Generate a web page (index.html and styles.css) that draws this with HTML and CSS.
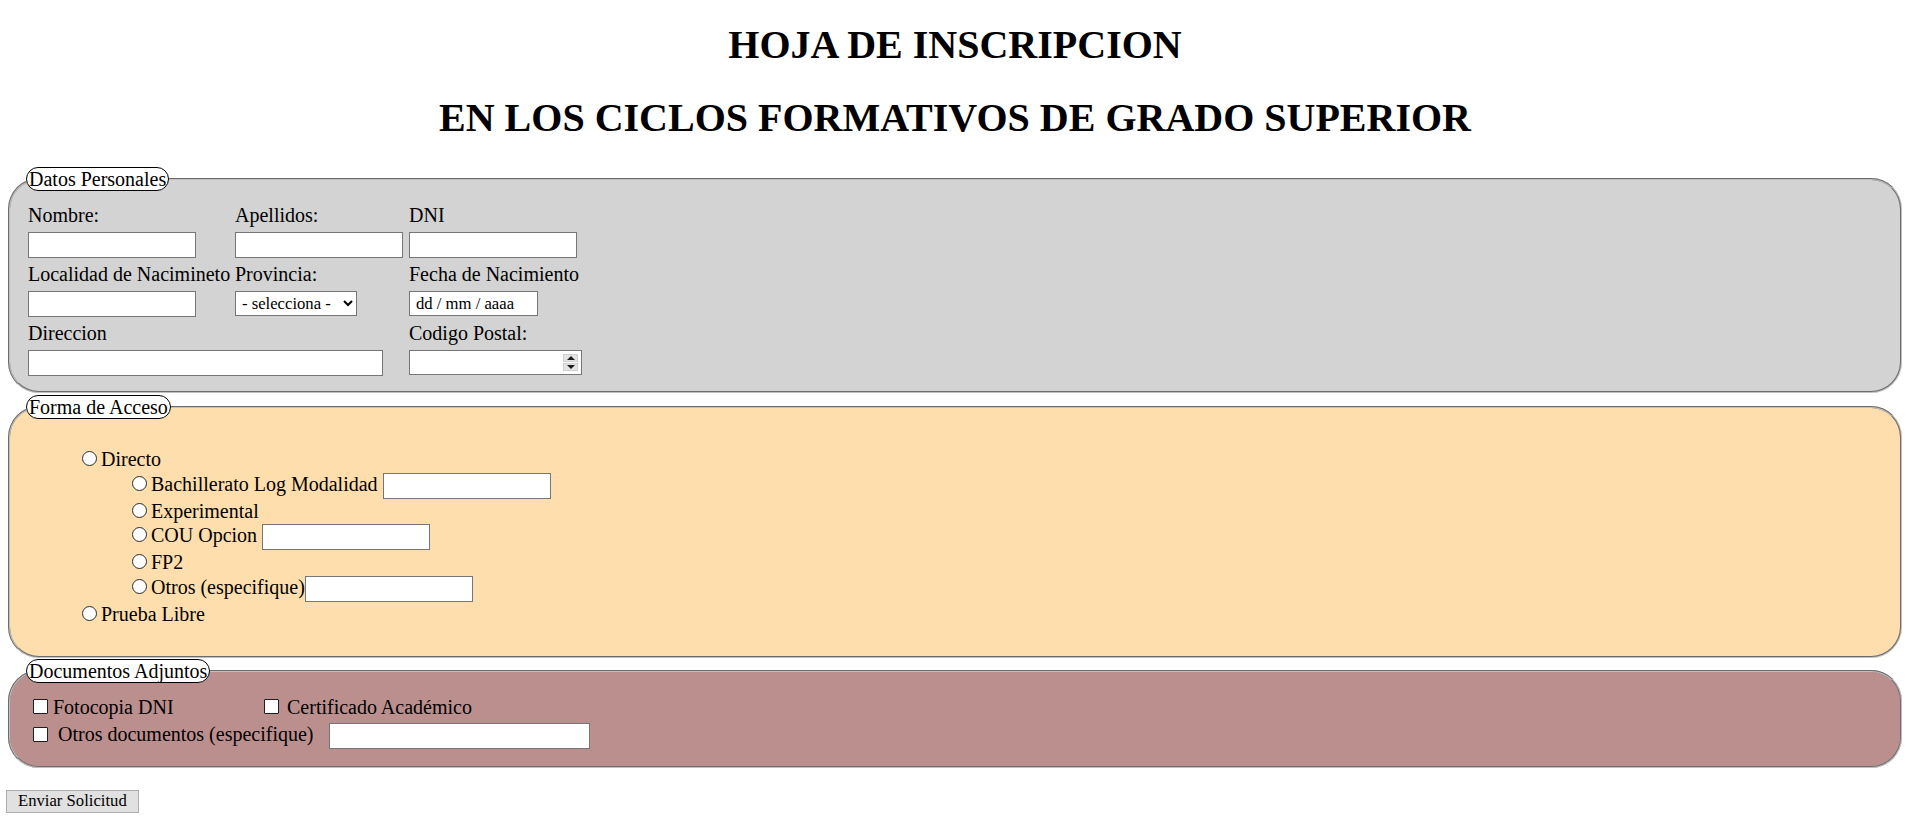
FILE: index.html
```html
<!DOCTYPE html>
<html lang="es">
<head>
<meta charset="utf-8">
<title>Hoja de inscripción</title>
<link rel="stylesheet" href="styles.css">
</head>
<body>
<header class="titles">
  <h1 class="title">HOJA DE INSCRIPCION</h1>
  <h1 class="title">EN LOS CICLOS FORMATIVOS DE GRADO SUPERIOR</h1>
</header>
<form class="form" action="#">
  <fieldset class="box box-gray">
    <legend class="tag">Datos Personales</legend>
    <div class="personal">
      <label class="lbl" for="nombre">Nombre:</label>
      <label class="lbl" for="apellidos">Apellidos:</label>
      <label class="lbl" for="dni">DNI</label>
      <input class="field w168" id="nombre" type="text">
      <input class="field w168" id="apellidos" type="text">
      <input class="field w168" id="dni" type="text">
      <label class="lbl" for="localidad">Localidad de Nacimineto</label>
      <label class="lbl" for="provincia">Provincia:</label>
      <label class="lbl" for="fecha">Fecha de Nacimiento</label>
      <input class="field w168" id="localidad" type="text">
      <select class="pick" id="provincia"><option>- selecciona -</option></select>
      <input class="field date" id="fecha" type="text" value="dd / mm / aaaa">
      <label class="lbl span2" for="direccion">Direccion</label>
      <label class="lbl" for="cp">Codigo Postal:</label>
      <input class="field wide span2" id="direccion" type="text">
      <div class="number">
        <input class="number-in" id="cp" type="text">
        <span class="spin"><span class="spin-btn"><span class="tri-up"></span></span><span class="spin-btn"><span class="tri-down"></span></span></span>
      </div>
    </div>
  </fieldset>

  <fieldset class="box box-orange">
    <legend class="tag">Forma de Acceso</legend>
    <ul class="access">
      <li>
        <div class="opt"><input class="radio" type="radio" name="acceso"><span class="opt-text">Directo</span></div>
        <ul class="sub">
          <li class="opt opt-in"><input class="radio" type="radio" name="directo"><span class="opt-text">Bachillerato Log Modalidad</span><input class="field w168 gap-sp" type="text"></li>
          <li class="opt"><input class="radio" type="radio" name="directo"><span class="opt-text">Experimental</span></li>
          <li class="opt opt-in"><input class="radio" type="radio" name="directo"><span class="opt-text">COU Opcion</span><input class="field w168 gap-sp" type="text"></li>
          <li class="opt"><input class="radio" type="radio" name="directo"><span class="opt-text">FP2</span></li>
          <li class="opt opt-in"><input class="radio" type="radio" name="directo"><span class="opt-text">Otros (especifique)</span><input class="field w168" type="text"></li>
        </ul>
      </li>
      <li class="opt"><input class="radio" type="radio" name="acceso"><span class="opt-text">Prueba Libre</span></li>
    </ul>
  </fieldset>

  <fieldset class="box box-rose">
    <legend class="tag">Documentos Adjuntos</legend>
    <div class="docs">
      <div class="doc-row">
        <label class="doc doc-first"><input class="check" type="checkbox"><span class="doc-text">Fotocopia DNI</span></label>
        <label class="doc"><input class="check check-b" type="checkbox"><span class="doc-text doc-text-b">Certificado Académico</span></label>
      </div>
      <div class="doc-row doc-row-2">
        <label class="doc"><input class="check check-2" type="checkbox"><span class="doc-text doc-text-2">Otros documentos (especifique)</span></label>
        <input class="field other" type="text">
      </div>
    </div>
  </fieldset>

  <button class="send" type="submit">Enviar Solicitud</button>
</form>
</body>
</html>
```

FILE: styles.css
```css
* {
  box-sizing: border-box;
}

html {
  background: #fff;
}

body {
  margin: 0 6px;
  font-family: "Liberation Serif", "Times New Roman", serif;
  font-size: 20px;
  line-height: 23px;
  color: #000;
}

.titles {
  display: flex;
  flex-direction: column;
  gap: 28.5px;
  padding-top: 23px;
  margin-bottom: 27px;
}

.title {
  margin: 0;
  font-size: 40px;
  line-height: 44px;
  font-weight: bold;
  text-align: center;
}

.form {
  margin: 0;
}

.box {
  margin: 2px 2px 0;
  padding: 7px 15px 12px;
  border: 2px groove #c0c0c0;
  border-radius: 31px;
  min-width: 0;
}

.box-gray {
  background: #d3d3d3;
}

.box-orange {
  background: #ffdead;
}

.box-rose {
  margin-top: 1px;
  background: #bc8f8f;
}

.tag {
  margin-left: 1px;
  padding: 0 2px;
  border: 1px solid #000;
  border-radius: 12px;
  background: #fff;
  font-size: 20px;
  line-height: 22px;
}

/* Datos personales */
.personal {
  display: grid;
  grid-template-columns: 207px 174px 1fr;
  row-gap: 5px;
  align-items: center;
  padding: 6px 0 3.5px 3px;
}

.lbl {
  line-height: 23px;
  white-space: nowrap;
}

.span2 {
  grid-column: span 2;
}

.field {
  display: block;
  height: 26px;
  margin: 0;
  padding: 1px 3px;
  border: 1px solid #767676;
  border-radius: 0;
  background: #fff;
  font-family: "Liberation Serif", "Times New Roman", serif;
  font-size: 16.67px;
  color: #000;
}

.w168 {
  width: 168px;
}

.wide {
  width: 355px;
}

.date {
  width: 129px;
  height: 25px;
  padding-left: 6px;
}

.pick {
  width: 122px;
  height: 25px;
  margin: 0;
  padding: 0 2px;
  border: 1px solid #767676;
  border-radius: 0;
  background-color: #fff;
  font-family: "Liberation Serif", "Times New Roman", serif;
  font-size: 16.67px;
  color: #000;
}

.number {
  display: flex;
  align-items: center;
  width: 173px;
  height: 25px;
  border: 1px solid #767676;
  background: #fff;
}

.number-in {
  flex: 1;
  min-width: 0;
  height: 100%;
  margin: 0;
  padding: 0 3px;
  border: 0;
  background: transparent;
  font-family: "Liberation Serif", "Times New Roman", serif;
  font-size: 16.67px;
}

.spin {
  display: flex;
  flex-direction: column;
  gap: 1px;
  width: 15px;
  height: 17px;
  margin-right: 3px;
}

.spin-btn {
  display: flex;
  flex: 1;
  align-items: center;
  justify-content: center;
  background: #e3e3e3;
  border: 1px solid #d0d0d0;
}

.tri-up {
  width: 0;
  height: 0;
  border-left: 4px solid transparent;
  border-right: 4px solid transparent;
  border-bottom: 4px solid #1a1a1a;
}

.tri-down {
  width: 0;
  height: 0;
  border-left: 4px solid transparent;
  border-right: 4px solid transparent;
  border-top: 4px solid #1a1a1a;
}

/* Forma de acceso */
.access {
  list-style: none;
  margin: 21px 0 17.5px;
  padding-left: 51px;
}

.sub {
  list-style: none;
  margin: 0;
  padding-left: 50px;
}

.opt {
  display: flex;
  align-items: flex-start;
  height: 24.5px;
}

.opt-in {
  height: 27px;
}

.radio {
  appearance: none;
  flex: none;
  width: 15px;
  height: 15px;
  margin: 4px 4px 0 6px;
  border: 1px solid #2a2a2a;
  border-radius: 50%;
  background: #fff;
}

.opt-text {
  margin-top: 1px;
  line-height: 23px;
  white-space: nowrap;
}

.opt .field {
  margin-top: 1px;
}

.gap-sp {
  margin-left: 5px;
}

/* Documentos */
.docs {
  display: flex;
  flex-direction: column;
  gap: 3.5px;
  padding: 5px 0 4.5px;
}

.doc-row {
  display: flex;
  align-items: flex-start;
  height: 25px;
}

.doc-row-2 {
  height: 26px;
}

.doc {
  display: flex;
  align-items: flex-start;
}

.doc-first {
  width: 239px;
}

.check {
  appearance: none;
  flex: none;
  width: 15px;
  height: 15px;
  margin: 4px 0 0 8px;
  border: 1px solid #1f1f1f;
  border-radius: 1px;
  background: #fff;
}

.check-b {
  margin-left: 0;
}

.check-2 {
  margin-top: 3.5px;
}

.doc-text {
  margin: 1px 0 0 5px;
  line-height: 23px;
  white-space: nowrap;
}

.doc-text-b {
  margin-left: 8px;
}

.doc-text-2 {
  margin: 0 0 0 10px;
}

.other {
  width: 261px;
  margin-left: 15.5px;
}

.send {
  display: block;
  height: 23px;
  margin: 22px 0 0;
  padding: 0 11px;
  border: 1px solid #adadad;
  border-radius: 0;
  background: #e1e1e1;
  font-family: "Liberation Serif", "Times New Roman", serif;
  font-size: 16.67px;
  color: #000;
}
```
